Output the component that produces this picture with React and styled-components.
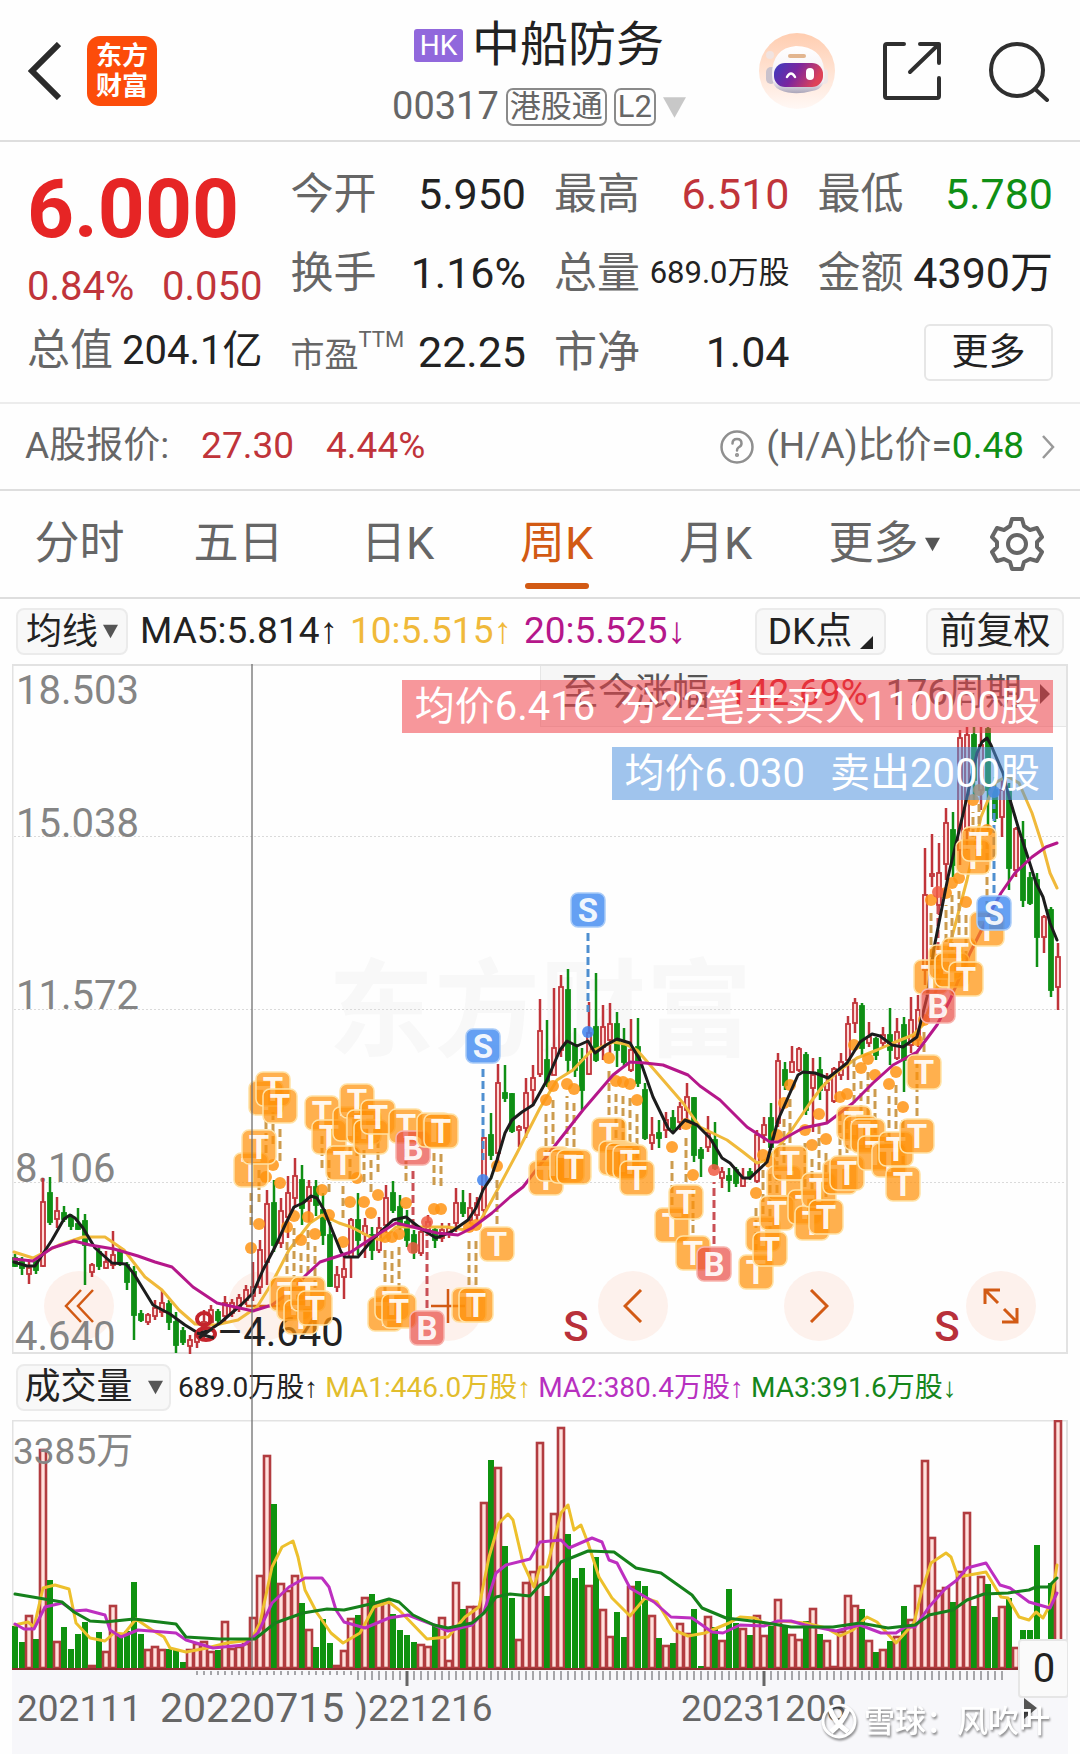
import React from 'react';
import styled, { createGlobalStyle } from 'styled-components';

const RED = '#c0343a';
const GREEN = '#0f8f14';
const ORANGE = '#d25a14';
const YELLOW = '#f0b93a';
const MAGENTA = '#b5178a';

const GlobalStyle = createGlobalStyle`
  * {
    box-sizing: border-box;
  }

  body {
    margin: 0;
    background: #fefefe;
    color: #222;
    font-family: Roboto, 'Liberation Sans', 'Noto Sans CJK SC', sans-serif;
    line-height: 1.25;
  }

  button, select {
    font: inherit;
    color: inherit;
    margin: 0;
    padding: 0;
    border: 0;
    background: none;
  }

  svg {
    display: block;
  }
`;

// Header
const Header = styled.header`
  display: grid;
  grid-template-columns: 1fr auto 1fr;
  height: 142px;
  padding: 0 30px 0 28px;
  border-bottom: 2px solid #dedede;
`;

const HeaderSide = styled.div`
  display: flex;
  align-items: center;
  justify-content: ${(p) => (p.$end ? 'flex-end' : 'flex-start')};
  gap: ${(p) => (p.$end ? '46px' : '26px')};
  padding-top: 2px;
`;

const AppLogo = styled.a`
  display: flex;
  flex-direction: column;
  align-items: center;
  justify-content: center;
  width: 70px;
  height: 70px;
  border-radius: 13px;
  background: #fc4c0a;
  color: #fff;
  font-size: 26px;
  font-weight: 700;
  line-height: 30px;
  text-decoration: none;
`;

const TitleBlock = styled.div`
  display: flex;
  flex-direction: column;
  align-items: center;
  padding-top: 12px;
`;

const TitleRow = styled.div`
  display: flex;
  align-items: center;
  gap: 9px;
  height: 66px;

  h1 {
    margin: 0;
    font-size: 48px;
    font-weight: 400;
    line-height: 64px;
  }
`;

const Market = styled.span`
  width: 49px;
  height: 33px;
  border-radius: 3px;
  background: #9168dc;
  color: #fff;
  font-size: 28px;
  line-height: 33px;
  text-align: center;
`;

const CodeRow = styled.div`
  display: flex;
  align-items: center;
  gap: 7px;
  height: 58px;
  color: #666;
  font-size: 38px;
`;

const Tag = styled.span`
  height: 38px;
  padding: 0 2px;
  border: 2px solid #8a8a8a;
  border-radius: 7px;
  font-size: 31px;
  line-height: 34px;
`;

// Quote
const Quote = styled.section`
  display: grid;
  grid-template-columns: repeat(4, 1fr);
  gap: 28px;
  padding: 13px 27px 10px;
  border-bottom: 2px solid #ececec;
`;

const QuoteCol = styled.div`
  display: flex;
  flex-direction: column;
  min-width: 0;
`;

const Price = styled.div`
  height: 106px;
  color: #e62525;
  font-size: 82px;
  font-weight: 700;
  line-height: 108px;
`;

const Change = styled.div`
  display: flex;
  justify-content: space-between;
  height: 50px;
  color: ${RED};
  font-size: 40px;
  line-height: 52px;
`;

const Cell = styled.div`
  display: flex;
  align-items: center;
  justify-content: ${(p) => (p.$end ? 'flex-end' : 'space-between')};
  height: 79px;
  white-space: nowrap;
`;

const Label = styled.span`
  color: #666;
  font-size: ${(p) => (p.$small ? '34px' : '43px')};

  sup {
    font-size: 22px;
    line-height: 1;
    vertical-align: 20px;
  }
`;

const Value = styled.span`
  color: ${(p) => p.$color || '#222'};
  font-size: ${(p) => p.$size || 43}px;
`;

const MoreButton = styled.button`
  width: 129px;
  height: 57px;
  border: 2px solid #e6e6e6;
  border-radius: 6px;
  font-size: 37px;
  line-height: 53px;
`;

const AShareRow = styled.section`
  display: flex;
  align-items: center;
  height: 87px;
  padding: 0 25px;
  border-bottom: 2px solid #dedede;
  color: #666;
  font-size: 37px;
  white-space: nowrap;
`;

const Figure = styled.span`
  margin-left: ${(p) => p.$gap || 0}px;
  color: ${(p) => p.$color};
`;

const RatioLink = styled.a`
  display: flex;
  align-items: center;
  margin-left: auto;
  color: inherit;
  text-decoration: none;

  svg:first-child {
    margin-right: 12px;
  }

  svg:last-child {
    margin-left: 17px;
  }
`;

// Tabs
const Tabs = styled.nav`
  display: grid;
  grid-template-columns: repeat(5, 1fr) 178px 87px;
  height: 108px;
  padding-right: 20px;
  border-bottom: 2px solid #dedede;
`;

const Tab = styled.button`
  position: relative;
  display: flex;
  align-items: center;
  justify-content: center;
  gap: 6px;
  color: ${(p) => (p.$active ? ORANGE : '#666')};
  font-size: 45px;

  &::after {
    content: '';
    position: absolute;
    bottom: 8px;
    left: calc(50% - 32px);
    width: 64px;
    height: 6px;
    border-radius: 3px;
    background: ${(p) => (p.$active ? ORANGE : 'transparent')};
  }
`;

// Chart toolbars
const Toolbar = styled.div`
  display: flex;
  align-items: center;
  gap: 12px;
  height: 65px;
  padding: 0 16px;
  font-size: 37px;
  white-space: nowrap;
`;

const VolumeToolbar = styled(Toolbar)`
  gap: 7px;
  height: 66px;
  padding: 0 4px;
  font-size: 28px;
`;

const Picker = styled.label`
  display: flex;
  align-items: center;
  justify-content: center;
  gap: ${(p) => p.$gap}px;
  flex: none;
  width: ${(p) => p.$width}px;
  height: 47px;
  border: 2px solid #ebebeb;
  border-radius: 8px;
  background: #f8f8f8;
  font-size: 36px;

  select {
    appearance: none;
    height: 44px;
    line-height: 44px;
    outline: none;
  }
`;

const ToolButton = styled.button`
  display: flex;
  align-items: center;
  justify-content: center;
  gap: 8px;
  width: ${(p) => p.$width}px;
  height: 47px;
  margin-left: ${(p) => p.$push || '0'};
  border: 2px solid #ebebeb;
  border-radius: 8px;
  background: #f8f8f8;
  font-size: 37px;
  line-height: 43px;

  svg {
    align-self: flex-end;
    margin-bottom: 4px;
  }
`;

const Reading = styled.span`
  color: ${(p) => p.$color};
`;

// Charts
const Charts = styled.section`
  position: relative;
  margin: 0 12px;
`;

const PriceArea = styled.div`
  position: relative;
`;

const Plot = styled.svg`
  position: relative;
  width: 100%;
  height: auto;
  pointer-events: none;
`;

const Crosshair = styled.div`
  position: absolute;
  top: 0;
  bottom: 86px;
  left: 22.6%;
  width: 2px;
  background: rgba(110, 110, 110, 0.65);
  pointer-events: none;
`;

const Since = styled.button`
  position: absolute;
  top: 0;
  right: 0;
  display: flex;
  align-items: center;
  justify-content: space-between;
  width: 528px;
  height: 63px;
  padding: 0 17px 4px 20px;
  border: 1px solid #e6e6e6;
  background: #f6f6f6;
  color: #555;
  font-size: 37px;
  white-space: nowrap;
`;

const TradeTip = styled.div`
  position: absolute;
  top: ${(p) => p.$top}px;
  right: 15px;
  display: flex;
  gap: 25px;
  height: 53px;
  padding: 0 13px;
  background: ${(p) => p.$color};
  color: #fff;
  font-size: 40px;
  line-height: 53px;
  white-space: nowrap;
`;

const RoundButton = styled.button`
  position: absolute;
  top: 93%;
  left: ${(p) => p.$at}%;
  display: flex;
  align-items: center;
  justify-content: center;
  width: 70px;
  height: 70px;
  margin: -35px 0 0 -35px;
  border-radius: 50%;
  background: #fdf1ec;
`;

const Caret = ({ size = 15, color = '#555' }) => (
  <svg width={size} height={size} viewBox="0 0 10 10" aria-hidden="true">
    <path d="M0 0.5H10L5 9.5Z" fill={color} />
  </svg>
);

const Robot = () => (
  <svg width="78" height="80" viewBox="0 0 78 80" aria-hidden="true">
    <defs>
      <linearGradient id="halo" x1="0" y1="0" x2="0" y2="1">
        <stop offset="0" stopColor="#ffcdb0" />
        <stop offset="1" stopColor="#fff8f5" />
      </linearGradient>
      <linearGradient id="visor" x1="0" y1="0" x2="1" y2="0.3">
        <stop offset="0" stopColor="#3a3cc0" />
        <stop offset="0.5" stopColor="#7a259f" />
        <stop offset="1" stopColor="#de4258" />
      </linearGradient>
      <linearGradient id="shell" x1="0" y1="0" x2="0" y2="1">
        <stop offset="0" stopColor="#ffffff" />
        <stop offset="0.75" stopColor="#f3eef3" />
        <stop offset="1" stopColor="#a9a4b8" />
      </linearGradient>
    </defs>
    <circle cx="39" cy="40" r="38" fill="url(#halo)" />
    <circle cx="12" cy="24" r="4" fill="#f1e3e0" />
    <rect x="8" y="36" width="10" height="17" rx="5" fill="#c9c2cc" />
    <rect x="61" y="38" width="9" height="15" rx="4" fill="#f0e7e7" />
    <path d="M14 44Q14 17 38 15Q64 16 66 38Q69 58 54 60Q36 65 22 59Q14 56 14 44Z" fill="url(#shell)" />
    <rect x="30" y="23" width="18" height="4" rx="2" fill="#e2b58f" />
    <rect x="16" y="32" width="49" height="24" rx="11" fill="url(#visor)" />
    <path d="M29 46Q33 39 37 46" fill="none" stroke="#fff" strokeWidth="2.5" strokeLinecap="round" />
    <rect x="48" y="37" width="8" height="12" rx="4" fill="#fff" />
  </svg>
);

// [up, high, body top, body bottom, low, volume]
const weeks = [
  [0, 1254, 1258, 1266, 1267, 42], [0, 1257, 1262, 1268, 1275, 26], [1, 1260, 1268, 1274, 1284, 53],
  [0, 1260, 1262, 1270, 1274, 29], [1, 1178, 1202, 1266, 1267, 219], [0, 1177, 1193, 1222, 1225, 88],
  [1, 1197, 1211, 1219, 1228, 27], [0, 1206, 1213, 1219, 1222, 41], [0, 1214, 1217, 1226, 1230, 19],
  [0, 1208, 1224, 1229, 1230, 34], [0, 1214, 1221, 1245, 1285, 46], [1, 1263, 1265, 1272, 1277, 3],
  [0, 1247, 1252, 1266, 1270, 36], [1, 1251, 1262, 1268, 1269, 17], [1, 1231, 1255, 1265, 1269, 63],
  [0, 1248, 1252, 1262, 1266, 33], [0, 1262, 1265, 1282, 1290, 37], [0, 1266, 1272, 1315, 1340, 86],
  [0, 1310, 1314, 1320, 1322, 34], [1, 1313, 1315, 1322, 1325, 19], [1, 1300, 1308, 1316, 1320, 22],
  [1, 1290, 1303, 1312, 1317, 19], [0, 1300, 1304, 1322, 1330, 19], [0, 1312, 1322, 1345, 1353, 18],
  [0, 1327, 1331, 1342, 1345, 6], [1, 1335, 1340, 1346, 1354, 19], [1, 1330, 1334, 1342, 1348, 25],
  [1, 1310, 1322, 1332, 1338, 27], [1, 1305, 1310, 1322, 1326, 17], [0, 1309, 1312, 1320, 1324, 18],
  [1, 1296, 1303, 1316, 1322, 47], [1, 1299, 1303, 1313, 1317, 20], [1, 1294, 1298, 1308, 1312, 22],
  [1, 1285, 1290, 1300, 1305, 25], [1, 1262, 1287, 1296, 1301, 51], [1, 1240, 1250, 1287, 1294, 93],
  [1, 1190, 1204, 1262, 1285, 213], [0, 1180, 1203, 1245, 1252, 164], [1, 1198, 1211, 1243, 1248, 85],
  [1, 1176, 1193, 1217, 1238, 78], [1, 1158, 1176, 1198, 1208, 93], [0, 1165, 1180, 1208, 1225, 65],
  [1, 1180, 1187, 1201, 1222, 39], [0, 1180, 1187, 1205, 1216, 21], [0, 1193, 1210, 1235, 1245, 49],
  [0, 1222, 1235, 1286, 1287, 25], [1, 1266, 1275, 1287, 1292, 3], [1, 1257, 1269, 1277, 1299, 18],
  [1, 1218, 1220, 1257, 1278, 50], [0, 1193, 1220, 1240, 1255, 53], [1, 1218, 1226, 1234, 1258, 71],
  [0, 1227, 1235, 1250, 1260, 74], [1, 1217, 1228, 1250, 1253, 65], [1, 1185, 1198, 1225, 1233, 67],
  [0, 1181, 1193, 1210, 1213, 54], [0, 1195, 1207, 1225, 1230, 38], [0, 1210, 1222, 1240, 1247, 33],
  [0, 1230, 1235, 1252, 1259, 26], [1, 1227, 1232, 1253, 1256, 24], [1, 1215, 1222, 1230, 1232, 22],
  [0, 1227, 1230, 1240, 1248, 43], [1, 1223, 1230, 1238, 1242, 51], [1, 1223, 1228, 1234, 1238, 8],
  [1, 1188, 1203, 1223, 1232, 86], [0, 1190, 1203, 1213, 1217, 59], [1, 1193, 1208, 1220, 1224, 62],
  [1, 1197, 1203, 1215, 1220, 62], [1, 1137, 1138, 1210, 1218, 166], [0, 1113, 1135, 1155, 1160, 208],
  [1, 1064, 1083, 1153, 1163, 201], [0, 1065, 1093, 1098, 1102, 122], [0, 1093, 1094, 1131, 1133, 70],
  [1, 1125, 1127, 1130, 1147, 29], [1, 1078, 1093, 1128, 1138, 86], [1, 1065, 1078, 1090, 1106, 97],
  [1, 999, 1031, 1074, 1077, 226], [0, 1020, 1060, 1082, 1087, 72], [1, 988, 1048, 1075, 1075, 155],
  [1, 975, 987, 1050, 1057, 241], [0, 969, 990, 1060, 1074, 134], [0, 1028, 1045, 1070, 1077, 90],
  [0, 1048, 1060, 1090, 1110, 100], [1, 1002, 1033, 1074, 1075, 83], [0, 973, 1027, 1060, 1062, 111],
  [1, 1005, 1027, 1047, 1060, 59], [1, 1003, 1024, 1040, 1053, 32], [0, 1012, 1024, 1050, 1067, 56],
  [0, 1028, 1045, 1062, 1067, 31], [1, 1019, 1050, 1070, 1072, 82], [0, 1018, 1047, 1083, 1087, 87],
  [0, 1083, 1090, 1138, 1140, 82], [1, 1117, 1135, 1143, 1150, 53], [0, 1120, 1133, 1138, 1148, 30],
  [1, 1112, 1120, 1130, 1138, 23], [0, 1110, 1118, 1128, 1133, 25], [1, 1102, 1107, 1122, 1130, 45],
  [1, 1083, 1097, 1110, 1123, 35], [0, 1097, 1098, 1155, 1162, 59], [0, 1147, 1150, 1158, 1177, 2],
  [1, 1116, 1133, 1147, 1152, 52], [0, 1122, 1140, 1168, 1170, 41], [1, 1167, 1172, 1178, 1188, 28],
  [0, 1168, 1176, 1180, 1192, 79], [0, 1167, 1170, 1183, 1187, 45], [1, 1168, 1178, 1186, 1187, 40],
  [0, 1168, 1172, 1176, 1180, 33], [1, 1130, 1135, 1181, 1183, 53], [1, 1117, 1125, 1135, 1143, 33],
  [0, 1103, 1118, 1147, 1150, 42], [1, 1053, 1061, 1123, 1127, 69], [0, 1062, 1070, 1085, 1090, 43],
  [1, 1046, 1062, 1072, 1073, 34], [1, 1047, 1049, 1070, 1072, 29], [0, 1052, 1055, 1110, 1115, 47],
  [1, 1058, 1075, 1088, 1132, 60], [0, 1057, 1070, 1090, 1100, 34], [1, 1073, 1083, 1090, 1123, 28],
  [1, 1067, 1069, 1101, 1103, 2], [1, 1053, 1062, 1075, 1080, 37], [1, 1016, 1024, 1060, 1080, 73],
  [1, 998, 1003, 1023, 1033, 63], [0, 1003, 1006, 1048, 1057, 59], [1, 1022, 1037, 1043, 1047, 28],
  [0, 1037, 1039, 1055, 1060, 16], [1, 1027, 1035, 1043, 1048, 19], [0, 1008, 1035, 1050, 1065, 27],
  [1, 1018, 1032, 1058, 1060, 32], [0, 1017, 1025, 1060, 1092, 62], [1, 997, 1020, 1045, 1053, 49],
  [1, 995, 1010, 1040, 1047, 83], [1, 848, 895, 970, 985, 208], [1, 834, 874, 876, 887, 131],
  [1, 843, 873, 905, 915, 78], [1, 808, 823, 864, 880, 81], [0, 812, 830, 865, 877, 66],
  [1, 730, 738, 850, 865, 97], [1, 727, 735, 830, 850, 156], [0, 727, 735, 780, 800, 62],
  [1, 727, 745, 790, 810, 92], [0, 727, 729, 790, 830, 84], [0, 777, 790, 818, 822, 51],
  [1, 780, 790, 817, 837, 62], [0, 783, 790, 868, 890, 70], [1, 827, 829, 870, 877, 21],
  [0, 821, 840, 900, 907, 38], [0, 872, 878, 903, 905, 38], [0, 873, 880, 937, 967, 123],
  [1, 915, 917, 937, 953, 20], [0, 907, 910, 990, 997, 85], [1, 943, 957, 987, 1010, 248],
];

const weekX = (i) => 15 + i * 7;

const ma5 = '14,1262 27,1266 35,1266 52,1240 64,1219 70,1215 75,1218 83,1228 95,1248 112,1263 126,1264 134,1274 153,1305 170,1314 185,1325 198,1333 208,1331 220,1323 241,1305 253,1293 263,1270 275,1247 286,1223 294,1207 303,1203 311,1196 317,1198 324,1210 341,1252 345,1257 358,1257 372,1240 393,1220 406,1217 420,1228 436,1238 451,1232 468,1220 476,1208 483,1190 491,1178 497,1160 505,1133 512,1120 522,1112 533,1105 547,1080 560,1050 567,1041 577,1046 588,1041 595,1053 606,1045 617,1039 630,1043 640,1060 653,1097 668,1128 673,1133 685,1120 697,1125 710,1138 722,1158 730,1163 743,1178 750,1178 767,1162 778,1120 798,1075 803,1072 815,1073 828,1078 847,1063 860,1042 872,1034 880,1036 892,1045 903,1047 917,1037 927,997 934,948 948,877 964,810 977,753 982,742 987,738 991,745 1003,773 1008,793 1019,830 1031,867 1036,883 1043,897 1050,923 1057,940';
const ma10 = '14,1252 33,1258 59,1245 83,1237 105,1237 124,1250 145,1277 162,1290 179,1310 195,1324 215,1325 238,1320 257,1307 272,1283 289,1250 310,1223 322,1215 339,1223 351,1227 372,1238 382,1240 396,1227 413,1227 448,1227 465,1230 479,1223 492,1200 517,1153 540,1108 557,1080 573,1070 590,1052 613,1042 625,1044 637,1050 657,1073 683,1103 700,1127 727,1140 743,1152 757,1163 767,1160 780,1145 793,1128 810,1103 822,1087 837,1072 857,1058 877,1050 893,1043 913,1035 923,1025 940,980 953,933 967,880 981,817 995,783 1007,776 1019,783 1032,813 1043,847 1050,873 1057,888';
const ma20 = '14,1259 33,1261 52,1248 74,1241 90,1245 114,1249 138,1256 155,1262 172,1267 193,1287 217,1303 235,1307 253,1311 272,1305 290,1292 306,1275 320,1262 351,1252 372,1238 396,1223 413,1227 437,1233 458,1235 472,1228 492,1213 510,1197 523,1187 557,1143 583,1110 613,1075 622,1068 630,1062 645,1063 663,1065 688,1075 700,1086 720,1100 747,1127 770,1142 778,1142 803,1128 827,1123 853,1103 873,1083 893,1065 917,1052 937,1025 950,1000 970,953 988,917 1001,893 1015,873 1032,857 1046,847 1057,843';

const vol1 = '15,1625 28,1622 34,1627 43,1588 55,1585 69,1589 76,1623 90,1638 105,1641 114,1633 124,1634 136,1619 152,1630 164,1637 170,1648 186,1652 207,1648 227,1643 251,1640 260,1623 272,1567 282,1547 293,1541 298,1557 305,1590 317,1613 331,1633 343,1643 360,1633 374,1607 389,1602 399,1610 427,1639 448,1637 465,1617 479,1607 489,1557 499,1523 508,1514 513,1520 523,1563 534,1587 540,1567 547,1567 561,1513 568,1505 574,1530 581,1525 588,1543 599,1577 612,1598 630,1616 645,1598 657,1602 674,1630 688,1636 705,1633 729,1623 740,1617 755,1618 767,1625 781,1621 805,1623 826,1628 840,1636 853,1630 867,1617 877,1622 896,1643 914,1623 922,1590 931,1563 946,1553 951,1557 958,1577 986,1572 1001,1597 1008,1598 1019,1617 1029,1620 1036,1612 1043,1618 1051,1603 1057,1565';
const vol2 = '15,1624 24,1629 34,1629 45,1607 62,1603 74,1611 86,1610 105,1615 110,1630 121,1637 138,1630 176,1633 186,1640 213,1648 244,1645 258,1633 272,1603 289,1587 305,1578 322,1578 329,1587 336,1610 344,1622 365,1628 389,1618 408,1615 434,1625 448,1631 472,1625 484,1612 496,1573 506,1565 530,1559 540,1542 561,1540 569,1548 592,1538 602,1542 609,1560 617,1563 630,1588 654,1602 671,1617 692,1618 712,1632 723,1633 740,1625 764,1626 778,1621 791,1621 805,1625 836,1631 860,1625 881,1633 896,1633 905,1627 915,1627 929,1607 945,1589 957,1580 967,1568 986,1563 1000,1585 1010,1588 1029,1602 1050,1608 1057,1593';
const vol3 = '15,1594 62,1602 74,1612 90,1621 105,1622 134,1619 176,1624 186,1637 220,1639 255,1639 275,1623 303,1613 327,1609 344,1610 375,1603 389,1599 399,1602 413,1615 434,1625 448,1628 472,1623 484,1613 496,1597 510,1594 530,1596 540,1585 547,1582 561,1562 588,1551 614,1552 636,1568 661,1573 692,1595 702,1608 726,1618 760,1622 791,1627 833,1627 860,1623 888,1628 915,1625 929,1615 953,1610 967,1600 984,1594 1008,1593 1029,1590 1036,1587 1048,1587 1057,1578';

// [kind, x, y of the dot on the candle, y of the badge]
const trades = [
  ['T', 251, 1248, 1170], ['T', 259, 1224, 1147], ['T', 266, 1177, 1098], ['T', 273, 1165, 1089],
  ['T', 280, 1183, 1106], ['T', 287, 1227, 1294], ['T', 294, 1216, 1303], ['T', 301, 1240, 1317],
  ['T', 308, 1217, 1294], ['T', 315, 1234, 1308], ['T', 322, 1190, 1113], ['T', 329, 1215, 1137],
  ['T', 350, 1202, 1124], ['T', 357, 1178, 1101], ['T', 343, 1242, 1163], ['T', 364, 1202, 1127],
  ['T', 371, 1213, 1137], ['T', 378, 1195, 1117], ['T', 385, 1237, 1314], ['T', 392, 1237, 1303],
  ['T', 399, 1234, 1311], ['T', 406, 1203, 1126], ['B', 413, 1248, 1148], ['B', 427, 1222, 1328],
  ['T', 434, 1209, 1130], ['T', 441, 1209, 1131], ['T', 469, 1227, 1305], ['T', 476, 1225, 1305],
  ['S', 483, 1180, 1046], ['T', 497, 1166, 1244], ['T', 546, 1100, 1178], ['T', 553, 1086, 1164],
  ['T', 567, 1084, 1166], ['T', 574, 1089, 1167], ['S', 588, 1032, 910], ['T', 609, 1058, 1135],
  ['T', 616, 1081, 1158], ['T', 623, 1082, 1160], ['T', 630, 1084, 1162], ['T', 637, 1100, 1178],
  ['T', 672, 1147, 1225], ['T', 686, 1124, 1202], ['T', 693, 1175, 1253], ['B', 714, 1170, 1264],
  ['T', 763, 1155, 1234], ['T', 756, 1193, 1272], ['T', 770, 1162, 1249], ['T', 784, 1103, 1183],
  ['T', 777, 1135, 1213], ['T', 790, 1085, 1163], ['T', 805, 1130, 1207], ['T', 812, 1145, 1223],
  ['T', 819, 1114, 1190], ['T', 826, 1139, 1217], ['T', 840, 1097, 1177], ['T', 847, 1094, 1173],
  ['T', 854, 1045, 1123], ['T', 861, 1068, 1133], ['T', 868, 1059, 1136], ['T', 875, 1075, 1153],
  ['T', 889, 1084, 1160], ['T', 896, 1072, 1149], ['T', 903, 1107, 1184], ['T', 917, 1040, 1136],
  ['T', 924, 1020, 1072], ['T', 931, 900, 977], ['T', 946, 893, 962], ['T', 952, 883, 970],
  ['T', 959, 878, 955], ['T', 966, 902, 979], ['B', 938, 892, 1006], ['T', 973, 800, 857],
  ['T', 987, 830, 929], ['T', 979, 790, 844], ['S', 994, 792, 913],
];

const tradeColors = {
  T: { box: 'rgba(255, 146, 10, 0.72)', edge: '#ffe2a6', dot: '#ff9414', line: '#cc9b4e' },
  B: { box: 'rgba(232, 70, 62, 0.68)', edge: '#f7b5ae', dot: '#f05a44', line: '#c94f55' },
  S: { box: 'rgba(62, 136, 240, 0.8)', edge: '#a9cbf8', dot: '#3d82ee', line: '#4f8fd0' },
};

const Candle = ({ x, up, high, top, bottom, low }) => {
  const color = up ? RED : GREEN;
  return (
    <g stroke={color} strokeWidth="2.5">
      <path d={`M${x} ${high}V${low}`} />
      <rect
        x={x - 2}
        y={top}
        width="4"
        height={Math.max(bottom - top, 1)}
        fill={up ? '#ffd9d6' : GREEN}
        strokeWidth="1.8"
      />
    </g>
  );
};

// the link stops short of the badge, and of the candle when the badge is above it
const TradeLink = ({ kind, x, dot, badge }) => {
  const above = badge < dot;
  const from = above ? badge + 23 : badge - 20;
  const to = above ? dot - 20 : dot + 12;
  return (
    <g>
      <path
        d={`M${x} ${from}V${to}`}
        stroke={tradeColors[kind].line}
        strokeWidth="3"
        strokeDasharray="8 4"
      />
      <circle cx={x} cy={dot} r="6" fill={tradeColors[kind].dot} fillOpacity="0.85" />
    </g>
  );
};

const TradeBadge = ({ kind, x, y }) => (
  <g>
    <rect
      x={x - 17}
      y={y - 17}
      width="34"
      height="34"
      rx="7"
      fill={tradeColors[kind].box}
      stroke={tradeColors[kind].edge}
      strokeWidth="1.5"
    />
    <text x={x} y={y + 12} textAnchor="middle" fontSize="33" fontWeight="700" fill="#fff" fillOpacity="0.92">
      {kind}
    </text>
  </g>
);

const Line = ({ points, color, width = 3 }) => (
  <polyline points={points} fill="none" stroke={color} strokeWidth={width} strokeLinejoin="round" strokeLinecap="round" />
);

const PriceChart = () => (
  <Plot viewBox="12 664 1056 690" role="img" aria-label="周K">
    <text x="540" y="1048" textAnchor="middle" fontSize="106" fontWeight="700" fill="#f8f8f8">东方财富</text>
    <path d="M12.5 1354V665H1067V1353H12" fill="none" stroke="#e2e2e2" strokeWidth="2" />
    <path d="M14 836.5H1066M14 1009.5H1066M14 1182.5H1066" stroke="#dadada" strokeDasharray="2 2" />
    <g fontSize="40" fill="#858585">
      <text x="16" y="704">18.503</text>
      <text x="16" y="837">15.038</text>
      <text x="16" y="1009">11.572</text>
      <text x="15" y="1182">8.106</text>
      <text x="15" y="1350">4.640</text>
    </g>
    <text x="217" y="1346" fontSize="40" fill="#222">–4.640</text>
    {weeks.map(([up, high, top, bottom, low], i) => (
      <Candle key={i} x={weekX(i)} up={up} high={high} top={top} bottom={bottom} low={low} />
    ))}
    <Line points={ma10} color={YELLOW} />
    {trades.map(([kind, x, dot, badge]) => (
      <TradeLink key={`${x}-${dot}`} kind={kind} x={x} dot={dot} badge={badge} />
    ))}
    <Line points={ma5} color="#1c1c1c" />
    <Line points={ma20} color={MAGENTA} />
    <g fill="none" stroke="#c4242c" strokeWidth="4">
      <ellipse cx="204" cy="1319" rx="7" ry="6" />
      <ellipse cx="206" cy="1334" rx="9" ry="6" />
      <path d="M197 1333L214 1338M199 1338L213 1328" stroke="#222" strokeWidth="3" />
    </g>
    {trades.map(([kind, x, , badge]) => (
      <TradeBadge key={`${x}-${badge}`} kind={kind} x={x} y={badge} />
    ))}
    <g fontSize="42" fill="#b8303a" fontWeight="500" textAnchor="middle">
      <text x="576" y="1341">S</text>
      <text x="947" y="1341">S</text>
    </g>
  </Plot>
);

const minorTicks = Array.from({ length: 93 }, (_, i) => 358 + i * 7);
const fineTicks = Array.from({ length: 23 }, (_, i) => 197 + i * 7);

const VolumeChart = () => (
  <Plot viewBox="12 1420 1056 334" role="img" aria-label="成交量">
    <rect x="12" y="1670" width="1056" height="84" fill="#f7f7fa" />
    <path d="M12.5 1669V1420.5H1067V1669" fill="none" stroke="#e2e2e2" strokeWidth="2" />
    {weeks.map(([up, , , , , volume], i) =>
      up ? (
        <rect
          key={i}
          x={weekX(i) - 3}
          y={1669 - volume}
          width="6"
          height={Math.max(volume - 1, 1)}
          fill="#ffe0dc"
          stroke="#b23c40"
          strokeWidth="2.6"
        />
      ) : (
        <rect key={i} x={weekX(i) - 3} y={1668 - volume} width="6" height={volume} fill="#0f920f" />
      )
    )}
    <text x="13" y="1464" fontSize="37" fill="#858585">3385万</text>
    <path d="M12 1669H1020" stroke="#8f3030" strokeWidth="2" />
    <Line points={vol1} color="#edc02c" />
    <Line points={vol2} color="#bd2fc0" />
    <Line points={vol3} color="#15811b" />
    <path d={minorTicks.map((x) => `M${x} 1671V1680`).join('')} stroke="#8b8b8f" strokeWidth="1.5" />
    <path d={fineTicks.map((x) => `M${x} 1671V1675`).join('')} stroke="#8b8b8f" strokeWidth="1.5" />
    <path d="M407 1671V1686M764 1671V1686" stroke="#666" strokeWidth="3" />
    <g fill="#666" fontSize="37">
      <text x="17" y="1721">202111</text>
      <text x="355" y="1721">)221216</text>
      <text x="681" y="1721">20231208</text>
      <text x="160" y="1722" fontSize="41">20220715</text>
    </g>
    <rect x="1019" y="1640" width="49" height="57" rx="3" fill="#fafafa" stroke="#e6e6e6" strokeWidth="2" />
    <text x="1044" y="1682" fontSize="40" fill="#222" textAnchor="middle">0</text>
    <path d="M1024 1698L1037 1708L1024 1719Z" fill="#555" />
    <g style={{ filter: 'drop-shadow(1px 2px 1px rgba(0, 0, 0, 0.45))' }}>
      <circle cx="839" cy="1721" r="16" fill="none" stroke="#fff" strokeWidth="3" />
      <path d="M830 1709Q834 1722 848 1732M848 1709Q843 1722 831 1732" fill="none" stroke="#fff" strokeWidth="5" />
      <text x="864" y="1732" fontSize="31" fontWeight="500" fill="#fff">雪球：风吹叶</text>
    </g>
  </Plot>
);

const App = () => {
  return (
    <>
      <GlobalStyle />
      <Header>
        <HeaderSide>
          <button aria-label="返回">
            <svg width="33" height="58" viewBox="0 0 33 58" fill="none" stroke="#2b2b2b" strokeWidth="6">
              <path d="M31 2L4 29L31 56" />
            </svg>
          </button>
          <AppLogo href="#">
            <span>东方</span>
            <span>财富</span>
          </AppLogo>
        </HeaderSide>
        <TitleBlock>
          <TitleRow>
            <Market>HK</Market>
            <h1>中船防务</h1>
          </TitleRow>
          <CodeRow>
            <span>00317</span>
            <Tag>港股通</Tag>
            <Tag>L2</Tag>
            <Caret size={23} color="#c8c8c8" />
          </CodeRow>
        </TitleBlock>
        <HeaderSide $end>
          <button aria-label="助手">
            <Robot />
          </button>
          <button aria-label="分享">
            <svg width="60" height="60" viewBox="0 0 60 60" fill="none" stroke="#2f2f2f" strokeWidth="4" strokeLinecap="round" strokeLinejoin="round">
              <path d="M22 3H5Q3 3 3 5V55Q3 57 5 57H55Q57 57 57 55V37M38 3H57V22M56 4L28 31" />
            </svg>
          </button>
          <button aria-label="搜索">
            <svg width="62" height="62" viewBox="0 0 62 62" fill="none" stroke="#2f2f2f" strokeWidth="4" strokeLinecap="round">
              <circle cx="29" cy="30" r="26" />
              <path d="M47 49L59 60" />
            </svg>
          </button>
        </HeaderSide>
      </Header>

      <Quote>
        <QuoteCol>
          <Price>6.000</Price>
          <Change>
            <span>0.84%</span>
            <span>0.050</span>
          </Change>
          <Cell>
            <Label>总值</Label>
            <Value $size={40}>204.1亿</Value>
          </Cell>
        </QuoteCol>
        <QuoteCol>
          <Cell>
            <Label>今开</Label>
            <Value>5.950</Value>
          </Cell>
          <Cell>
            <Label>换手</Label>
            <Value>1.16%</Value>
          </Cell>
          <Cell>
            <Label $small>市盈<sup>TTM</sup></Label>
            <Value>22.25</Value>
          </Cell>
        </QuoteCol>
        <QuoteCol>
          <Cell>
            <Label>最高</Label>
            <Value $color={RED}>6.510</Value>
          </Cell>
          <Cell>
            <Label>总量</Label>
            <Value $size={31}>689.0万股</Value>
          </Cell>
          <Cell>
            <Label>市净</Label>
            <Value>1.04</Value>
          </Cell>
        </QuoteCol>
        <QuoteCol>
          <Cell>
            <Label>最低</Label>
            <Value $color={GREEN}>5.780</Value>
          </Cell>
          <Cell>
            <Label>金额</Label>
            <Value>4390万</Value>
          </Cell>
          <Cell $end>
            <MoreButton>更多</MoreButton>
          </Cell>
        </QuoteCol>
      </Quote>

      <AShareRow>
        <span>A股报价:</span>
        <Figure $color={RED} $gap={32}>27.30</Figure>
        <Figure $color={RED} $gap={32}>4.44%</Figure>
        <RatioLink href="#">
          <svg width="34" height="34" viewBox="0 0 34 34" fill="none" stroke="#8f8f8f" strokeWidth="2.5" strokeLinecap="round">
            <circle cx="17" cy="17" r="15.5" />
            <path d="M12.5 13.5Q12.5 9 17 9T21.5 13.5Q21.5 16 18.5 17.5Q17 18.5 17 20.5" />
            <circle cx="17" cy="25" r="0.8" />
          </svg>
          (H/A)比价=
          <Figure $color={GREEN}>0.48</Figure>
          <svg width="14" height="26" viewBox="0 0 14 26" fill="none" stroke="#999" strokeWidth="2.5">
            <path d="M2 2L12 13L2 24" />
          </svg>
        </RatioLink>
      </AShareRow>

      <Tabs>
        <Tab>分时</Tab>
        <Tab>五日</Tab>
        <Tab>日K</Tab>
        <Tab $active>周K</Tab>
        <Tab>月K</Tab>
        <Tab>更多 <Caret /></Tab>
        <Tab aria-label="设置">
          <svg width="54" height="56" viewBox="0 0 54 56" fill="none" stroke="#666" strokeWidth="4" strokeLinejoin="round">
            <path d="M22 3H32L34 10L40 14L47 12L52 21L47 26V31L52 36L47 45L40 43L34 46L32 53H22L20 46L14 43L7 45L2 36L7 31V26L2 21L7 12L14 14L20 10Z" />
            <circle cx="27" cy="28" r="9" />
          </svg>
        </Tab>
      </Tabs>

      <Toolbar>
        <Picker $width={112} $gap={4}>
          <select aria-label="指标">
            <option>均线</option>
          </select>
          <Caret />
        </Picker>
        <Reading $color="#222">MA5:5.814↑</Reading>
        <Reading $color={YELLOW}>10:5.515↑</Reading>
        <Reading $color={MAGENTA}>20:5.525↓</Reading>
        <ToolButton $width={131} $push="auto">
          DK点
          <svg width="13" height="13" viewBox="0 0 10 10"><path d="M10 0V10H0Z" fill="#222" /></svg>
        </ToolButton>
        <ToolButton $width={138} $push="28px">前复权</ToolButton>
      </Toolbar>

      <Charts>
        <PriceArea>
          <Since>
            <span>至今涨幅</span>
            <Reading $color="#d8202a">142.69%</Reading>
            <span>176周期</span>
            <svg width="10" height="20" viewBox="0 0 10 20"><path d="M0 0L10 10L0 20Z" fill="#444" /></svg>
          </Since>
          <RoundButton $at={6.3} aria-label="最早">
            <svg width="30" height="34" viewBox="0 0 30 34" fill="none" stroke={ORANGE} strokeWidth="2.5">
              <path d="M17 1L2 17L17 33M29 1L14 17L29 33" />
            </svg>
          </RoundButton>
          <RoundButton $at={23.8} aria-label="缩小">
            <svg width="34" height="34" viewBox="0 0 34 34" stroke={ORANGE} strokeWidth="2.5"><path d="M0 17H34" /></svg>
          </RoundButton>
          <RoundButton $at={41.3} aria-label="放大">
            <svg width="34" height="34" viewBox="0 0 34 34" stroke={ORANGE} strokeWidth="2.5"><path d="M0 17H34M17 0V34" /></svg>
          </RoundButton>
          <RoundButton $at={58.8} aria-label="向前">
            <svg width="20" height="34" viewBox="0 0 20 34" fill="none" stroke={ORANGE} strokeWidth="3"><path d="M18 1L2 17L18 33" /></svg>
          </RoundButton>
          <RoundButton $at={76.4} aria-label="向后">
            <svg width="20" height="34" viewBox="0 0 20 34" fill="none" stroke={ORANGE} strokeWidth="3"><path d="M2 1L18 17L2 33" /></svg>
          </RoundButton>
          <RoundButton $at={93.7} aria-label="全屏">
            <svg width="36" height="36" viewBox="0 0 36 36" fill="none" stroke={ORANGE} strokeWidth="3">
              <path d="M2 16V2H17M2 2L15 15M34 20V34H19M34 34L21 21" />
            </svg>
          </RoundButton>
          <PriceChart />
          <TradeTip $top={16} $color="rgba(240, 65, 72, 0.55)">
            <span>均价6.416</span>
            <span>分22笔共买入110000股</span>
          </TradeTip>
          <TradeTip $top={83} $color="rgba(82, 148, 222, 0.55)">
            <span>均价6.030</span>
            <span>卖出2000股</span>
          </TradeTip>
        </PriceArea>
        <VolumeToolbar>
          <Picker $width={155} $gap={14}>
            <select aria-label="副图指标">
              <option>成交量</option>
            </select>
            <Caret />
          </Picker>
          <Reading $color="#222">689.0万股↑</Reading>
          <Reading $color="#e2bd2c">MA1:446.0万股↑</Reading>
          <Reading $color="#b730c0">MA2:380.4万股↑</Reading>
          <Reading $color="#15861b">MA3:391.6万股↓</Reading>
        </VolumeToolbar>
        <VolumeChart />
        <Crosshair />
      </Charts>
    </>
  );
};

export default App;
